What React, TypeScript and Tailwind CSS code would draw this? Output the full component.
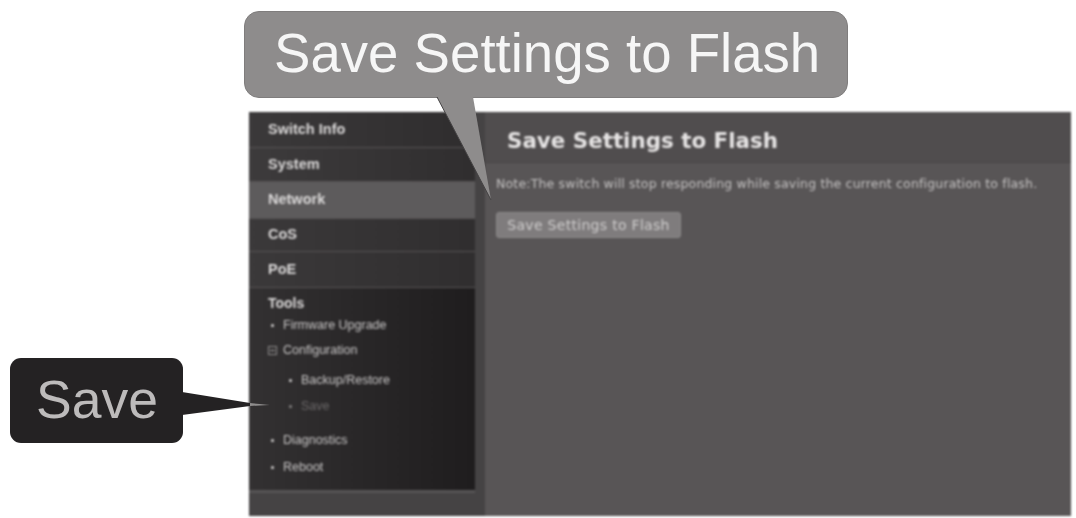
const sans = "font-['Liberation_Sans',Arial,sans-serif]";

function TopItem({ label, className }: { label: string; className: string }) {
  return (
    <div className={`flex items-center pl-[19px] text-[14.5px] font-bold text-[#dcdada] border-b border-[#565354] ${className}`}>
      {label}
    </div>
  );
}

function Bullet({ label, className = "", indent = false, muted = false }: { label: string; className?: string; indent?: boolean; muted?: boolean }) {
  return (
    <div className={`flex items-center text-[12.5px] ${muted ? "text-[#6a6768]" : "text-[#c8c6c6]"} ${indent ? "pl-[40px]" : "pl-[22px]"} ${className}`}>
      <span className={`w-[3px] h-[3px] rounded-full mr-[9px] ${muted ? "bg-[#8a8888]" : "bg-[#d8d6d6]"}`} />
      {label}
    </div>
  );
}

export default function App() {
  return (
    <div className={`relative w-[1076px] h-[518px] bg-white overflow-hidden ${sans}`}>
      <div className="blur-[0.8px] w-full h-full pl-[249px] pr-[5px] pt-[112px] pb-[2px]">
        <div className="flex h-full w-full">
          <aside className="w-[226px] flex flex-col bg-[#2c2a2b] shrink-0">
            <TopItem label="Switch Info" className="h-[36px] bg-gradient-to-r from-[#3b393a] to-[#2f2d2e]" />
            <TopItem label="System" className="h-[34px] bg-gradient-to-r from-[#3d3b3c] to-[#302e2f]" />
            <TopItem label="Network" className="h-[37px] bg-[#5d5b5c] pl-[18px]" />
            <TopItem label="CoS" className="h-[33px] bg-gradient-to-r from-[#3b393a] to-[#302e2f]" />
            <TopItem label="PoE" className="h-[36px] bg-gradient-to-r from-[#3b393a] to-[#302e2f]" />
            <div className="flex-1 flex flex-col bg-gradient-to-r from-[#333132] to-[#1f1d1e]">
              <div className="pl-[19px] pt-[7px] h-[26px] text-[14px] font-bold leading-[17px] text-[#dcdada]">Tools</div>
              <Bullet label="Firmware Upgrade" className="h-[22px]" />
              <div className="flex items-center h-[29px] pl-[19px] text-[12.5px] text-[#c8c6c6]">
                <span className="w-[9px] h-[9px] border border-[#8d8b8b] mr-[6px] flex items-center justify-center">
                  <span className="w-[5px] h-px bg-[#a5a3a3]" />
                </span>
                Configuration
              </div>
              <Bullet label="Backup/Restore" indent className="h-[31px]" />
              <Bullet label="Save" indent muted className="h-[21px]" />
              <Bullet label="Diagnostics" className="h-[47px]" />
              <Bullet label="Reboot" className="h-[6px]" />
            </div>
            <div className="h-[26px] bg-[#454344] border-t-[3px] border-[#565455]" />
          </aside>
          <div className="w-[10px] bg-[#454344] shrink-0" />
          <main className="flex-1 bg-[#585556]">
            <div className="h-[51px] flex items-center pl-[22px] pt-[8px] bg-[#504d4e] border-b border-[#484546] font-['DejaVu_Sans',sans-serif] text-[21.4px] font-bold text-[#e6e4e4]">
              Save Settings to Flash
            </div>
            <p className="pl-[11px] mt-[14px] text-[12.5px] leading-[14px] text-[#c4c2c2] whitespace-nowrap font-['DejaVu_Sans',sans-serif] tracking-[0.17px]">
              Note:The switch will stop responding while saving the current configuration to flash.
            </p>
            <button className="ml-[11px] mt-[21px] w-[185px] h-[26px] rounded-[3px] bg-[#7f7c7d] border border-[#8c8a8a] text-[14px] text-[#cfcdcd] font-['DejaVu_Sans',sans-serif] tracking-[0.3px]">
              Save Settings to Flash
            </button>
          </main>
        </div>
      </div>

      {/* Top callout */}
      <div className="absolute left-[244px] top-[11px] w-[604px] h-[87px] rounded-[15px] bg-[#8e8c8c] border border-[#7f7d7d] blur-[0.7px] flex items-center pl-[29px] pb-[2px] text-[54.6px] text-[#f6f6f6] whitespace-nowrap">
        Save Settings to Flash
      </div>
      <svg className="absolute left-[430px] top-[96px] blur-[0.5px]" width="70" height="110" viewBox="0 0 70 110">
        <path d="M7 1 L43 1 L61 104 Z" fill="#8e8c8c" />
        <path d="M7 1 L61 104" stroke="#454344" strokeWidth="1" fill="none" />
      </svg>

      {/* Left callout */}
      <div className="absolute left-[10px] top-[358px] w-[173px] h-[85px] rounded-[11px] bg-[#242223] blur-[0.7px] flex items-center pl-[26px] text-[53.5px] text-[#bdbbbb]">
        Save
      </div>
      <svg className="absolute left-[180px] top-[388px] blur-[0.5px]" width="95" height="32" viewBox="0 0 95 32">
        <path d="M2 4 L70 15 L90 17 L70 18 L2 27 Z" fill="#242223" />
        <path d="M70 15 L90 17 L70 18 Z" fill="#8f8d8d" />
      </svg>
    </div>
  );
}
